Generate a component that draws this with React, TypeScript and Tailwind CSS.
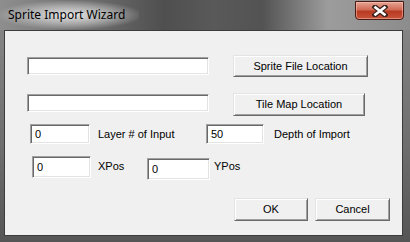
import React from 'react'

const field =
  'flex items-center bg-white pl-[4px] border border-t-[#a0a0a0] border-l-[#a0a0a0] border-b-white border-r-white shadow-[inset_1px_1px_0_#696969,inset_-1px_-1px_0_#e3e3e3] text-black'

const button =
  'flex items-center justify-center bg-[#f0f0f0] border border-t-[#e3e3e3] border-l-[#e3e3e3] border-b-[#696969] border-r-[#696969] shadow-[inset_1px_1px_0_#ffffff,inset_-1px_-1px_0_#a0a0a0] text-black'

function CloseGlyph() {
  return (
    <svg width="16" height="12" viewBox="0 0 16 12">
      <path d="M3 2 L13 10 M13 2 L3 10" stroke="#3a2420" strokeWidth="5" strokeLinecap="square" />
      <path d="M3.5 2.5 L12.5 9.5 M12.5 2.5 L3.5 9.5" stroke="#ffffff" strokeWidth="2.6" strokeLinecap="square" />
    </svg>
  )
}

export default function App() {
  return (
    <div
      className="w-[410px] h-[242px] flex flex-col overflow-hidden bg-[linear-gradient(to_bottom,#8a8a8a_0%,#6e6e6e_60%,#555555_100%)]"
      style={{ fontFamily: '"Liberation Sans", Arial, sans-serif' }}
    >
      {/* title bar */}
      <div className="h-[30px] shrink-0 flex items-start justify-between bg-[linear-gradient(to_right,#8e8e8e_0%,#727272_20%,#4f4f4f_40%,#595959_52%,#535353_64%,#9c9c9c_80%,#8c8c8c_100%)]">
        <div
          className="mt-[1px] h-[28px] pl-[8px] pr-[14px] flex items-center text-[12px] text-black bg-[radial-gradient(ellipse_at_center,rgba(235,235,235,0.95)_0%,rgba(200,200,200,0.6)_45%,rgba(160,160,160,0)_75%)]"
          style={{ fontFamily: '"Noto Sans", "Open Sans", sans-serif' }}
        >
          Sprite Import Wizard
        </div>
        <div className="mr-[6px] mt-[1px] w-[49px] h-[19px] flex items-center justify-center rounded-b-[4px] border border-[#4a1a14] shadow-[inset_0_0_0_1px_rgba(255,200,190,0.5)] bg-[linear-gradient(to_bottom,#e7a594_0%,#d06a55_45%,#b83a22_55%,#c8543a_100%)]">
          <CloseGlyph />
        </div>
      </div>

      {/* client area */}
      <div className="ml-[4px] mr-[7px] h-[206px] shrink-0 bg-[#f0f0f0] border border-[#3c3c3c] text-[11px] text-black">
        <div className="mt-[24px] flex items-center h-[22px]">
          <div className={`${field} ml-[22px] w-[182px] h-[18px]`} />
          <div className={`${button} ml-[24px] w-[135px] h-[22px]`}>Sprite File Location</div>
        </div>

        <div className="mt-[16px] flex items-start h-[23px]">
          <div className={`${field} ml-[22px] mt-[1px] w-[182px] h-[18px]`} />
          <div className={`${button} ml-[24px] w-[132px] h-[23px]`}>Tile Map Location</div>
        </div>

        <div className="mt-[8px] flex items-center h-[20px]">
          <div className={`${field} ml-[25px] w-[60px] h-[20px]`}>0</div>
          <div className="ml-[8px] w-[108px]">Layer # of Input</div>
          <div className={`${field} w-[58px] h-[20px]`}>50</div>
          <div className="ml-[10px]">Depth of Import</div>
        </div>

        <div className="mt-[12px] flex items-start h-[24px]">
          <div className={`${field} ml-[27px] w-[59px] h-[22px]`}>0</div>
          <div className="ml-[7px] w-[49px] h-[21px] flex items-center">XPos</div>
          <div className={`${field} mt-[2px] w-[63px] h-[22px]`}>0</div>
          <div className="ml-[4px] h-[21px] flex items-center">YPos</div>
        </div>

        <div className="mt-[18px] flex items-center h-[23px]">
          <div className={`${button} ml-[229px] w-[74px] h-[23px]`}>OK</div>
          <div className={`${button} ml-[7px] w-[75px] h-[23px]`}>Cancel</div>
        </div>
      </div>
    </div>
  )
}
